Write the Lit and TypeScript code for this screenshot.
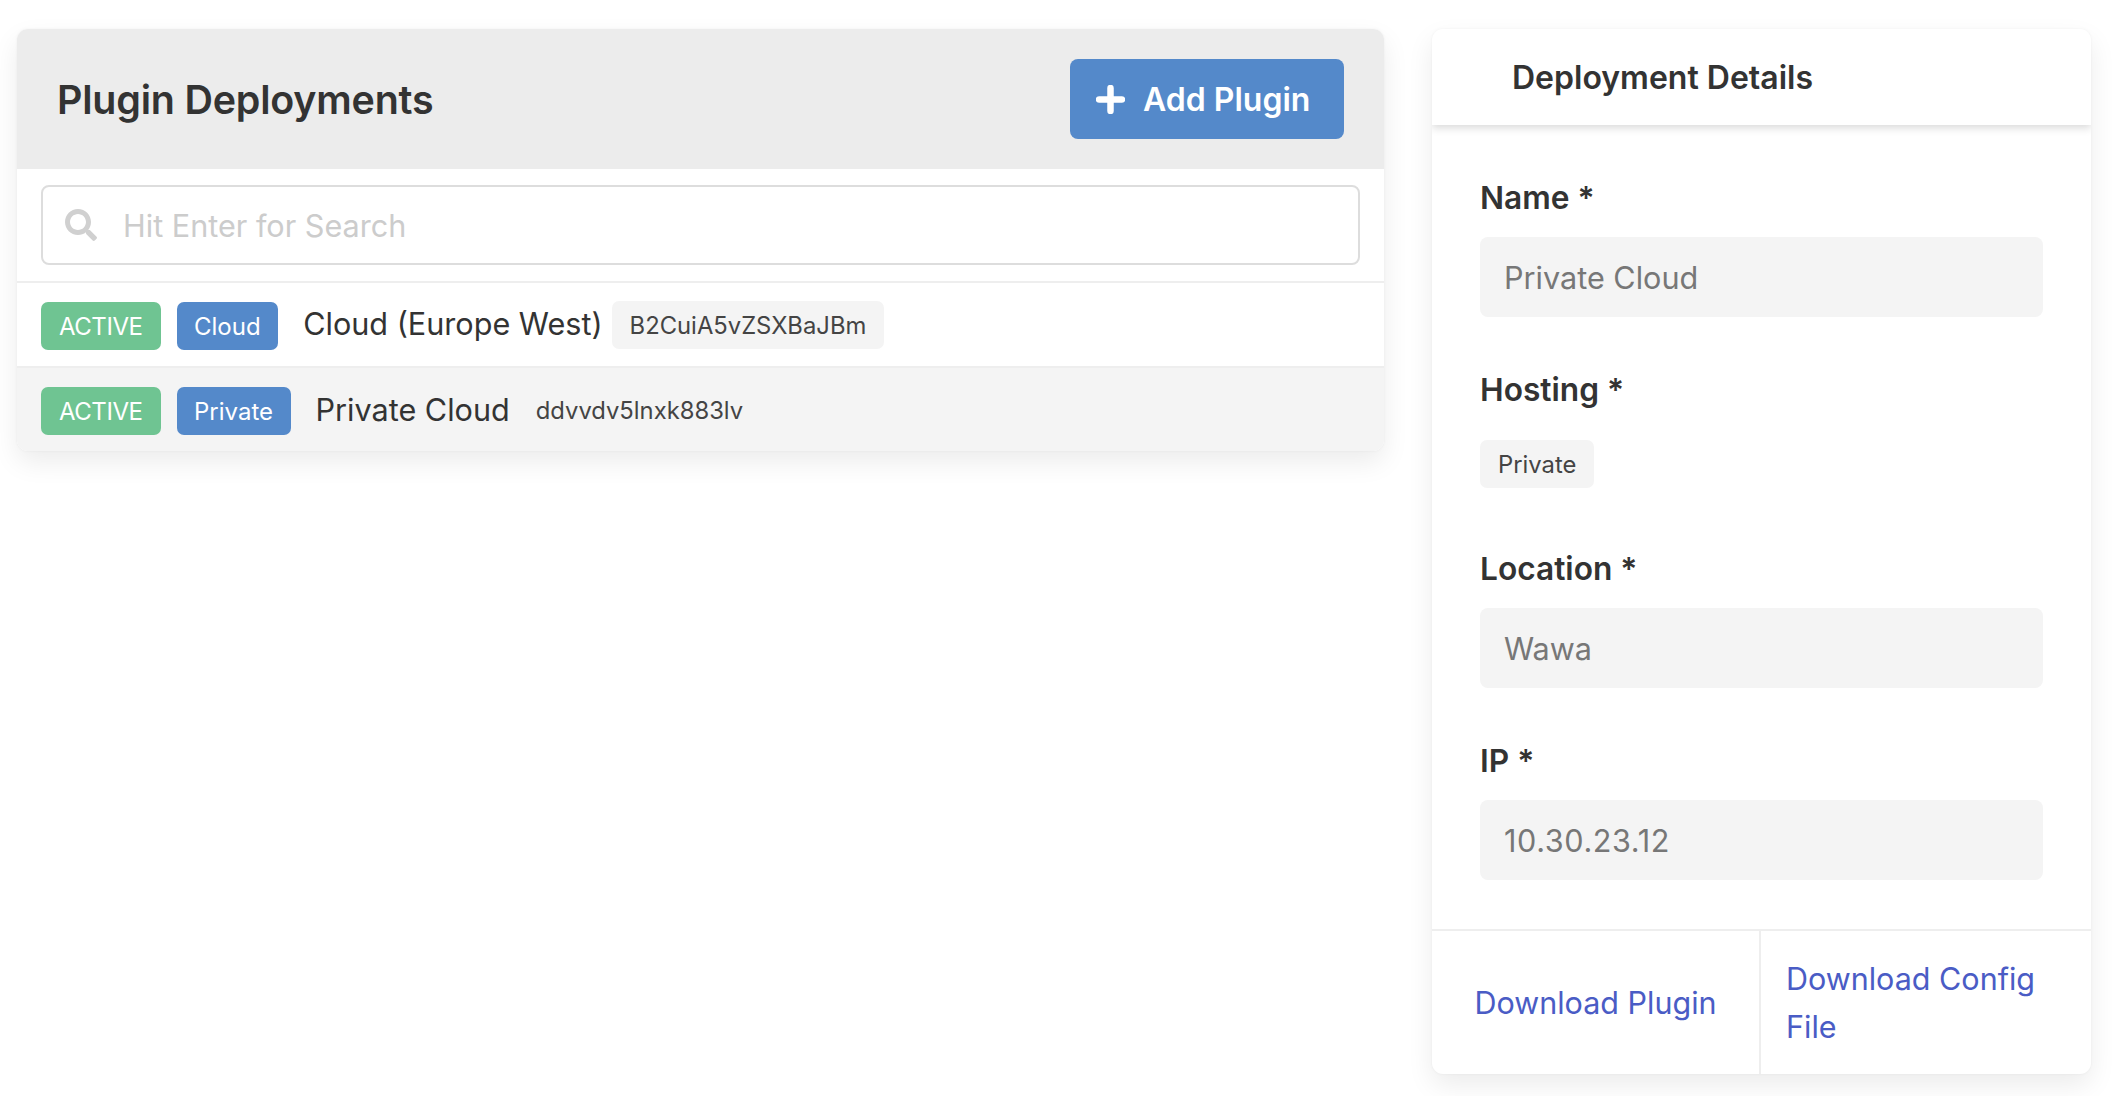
import { LitElement, html, css } from "lit";
import { customElement } from "lit/decorators.js";

@customElement("app-root")
export class AppRoot extends LitElement {
  static styles = css`
    :host { display: block; font-family: Inter, "Liberation Sans", sans-serif; color: #333; background: #fff; height: 1096px; overflow: hidden; box-sizing: border-box; }
    * { box-sizing: border-box; }
    .page { display: flex; align-items: flex-start; gap: 48px; padding: 29px 27px 0 17px; }
    .card { background: #fff; border-radius: 11px; box-shadow: 0 11px 27px rgba(0,0,0,.08), 0 0 3px rgba(0,0,0,.05); overflow: hidden; }
    .list { flex: 0 0 1367px; }
    .head { height: 140px; background: #ececec; display: flex; align-items: center; justify-content: space-between; padding: 0 40px; }
    .head h1 { margin: 2px 0 0; font-size: 39.4px; font-weight: 600; letter-spacing: -0.2px; }
    .add { height: 80px; width: 274px; background: #5489ca; color: #fff; border-radius: 8px; display: flex; align-items: center; gap: 18px; padding-left: 26px; font-size: 32px; font-weight: 600; }
    .add svg { width: 29px; height: 29px; flex: none; }
    .search-wrap { height: 114px; padding: 16px 24px 16px; border-bottom: 2px solid #eee; }
    .search { height: 80px; border: 2px solid #ddd; border-radius: 8px; display: flex; align-items: center; padding-left: 22px; gap: 26px; font-size: 30.6px; color: #ccc; }
    .search svg { width: 32px; height: 32px; fill: #d0d0d0; flex: none; }
    .row { height: 85px; display: flex; align-items: center; padding: 3px 24px 0; border-bottom: 2px solid #eee; }
    .row.alt { height: 83px; background: #f4f4f4; border-bottom: 0; }
    .badge { height: 48px; border-radius: 7px; display: flex; align-items: center; padding: 0 18px; color: #fff; font-size: 24px; margin-right: 16px; }
    .green { background: #6fc492; letter-spacing: -0.45px; }
    .blue { background: #5489ca; margin-right: 25px; padding: 0 17.5px; }
    .name { font-size: 30.6px; margin-right: 9px; margin-bottom: 6px; }
    .row.alt .name { margin-bottom: 4px; margin-right: 8px; }
    .chip { height: 48px; display: flex; align-items: center; padding: 0 18px; border-radius: 7px; font-size: 23.8px; color: #444; margin-bottom: 2px; }
    .chip.fill { background: #f4f4f4; }
    .details { flex: 0 0 659px; height: 1045px; display: flex; flex-direction: column; }
    .dhead { height: 96px; display: flex; align-items: center; padding-left: 80px; font-size: 32px; font-weight: 600; box-shadow: 0 3px 8px rgba(0,0,0,.15); position: relative; }
    .form { flex: 1; padding: 0 48px; }
    label { display: flex; align-items: center; height: 40px; font-size: 31.7px; font-weight: 600; margin-bottom: 20px; }
    .field { height: 80px; background: #f4f4f4; border-radius: 8px; display: flex; align-items: center; padding-left: 24px; font-size: 30.6px; color: #777; }
    .field.ip { letter-spacing: .6px; }
    .tag { display: flex; width: fit-content; align-items: center; height: 48px; margin-top: 31px; padding: 0 18px; background: #f4f4f4; border-radius: 7px; font-size: 23.8px; color: #444; }
    .group { margin-top: 52px; }
    .group.after-tag { margin-top: 60px; }
    .foot { display: flex; height: 145px; border-top: 2px solid #eee; font-size: 30.5px; line-height: 48px; color: #4a5cc5; }
    .foot a { display: flex; align-items: center; }
    .foot a:first-child { flex: 0 0 329px; justify-content: center; border-right: 2px solid #eee; }
    .foot a:last-child { flex: 1; padding: 0 25px; }
  `;

  render() {
    return html`<div class="page">
      <section class="card list">
        <header class="head">
          <h1>Plugin Deployments</h1>
          <div class="add"><svg viewBox="0 0 29 29"><path d="M14.5 3v23M3 14.5h23" stroke="#fff" stroke-width="6.5" stroke-linecap="round" fill="none"/></svg>Add Plugin</div>
        </header>
        <div class="search-wrap"><div class="search"><svg viewBox="0 0 512 512"><path d="M505 442.7L405.3 343c-4.5-4.5-10.6-7-17-7H372c27.6-35.3 44-79.7 44-128C416 93.1 322.9 0 208 0S0 93.1 0 208s93.1 208 208 208c48.3 0 92.7-16.4 128-44v16.3c0 6.4 2.5 12.5 7 17l99.7 99.7c9.4 9.4 24.6 9.4 33.9 0l28.3-28.3c9.4-9.4 9.4-24.6.1-34zM208 336c-70.7 0-128-57.2-128-128 0-70.7 57.2-128 128-128 70.7 0 128 57.2 128 128 0 70.7-57.2 128-128 128z"/></svg>Hit Enter for Search</div></div>
        <div class="row"><span class="badge green">ACTIVE</span><span class="badge blue">Cloud</span><span class="name">Cloud (Europe West)</span><span class="chip fill">B2CuiA5vZSXBaJBm</span></div>
        <div class="row alt"><span class="badge green">ACTIVE</span><span class="badge blue">Private</span><span class="name">Private Cloud</span><span class="chip">ddvvdv5lnxk883lv</span></div>
      </section>
      <aside class="card details">
        <div class="dhead">Deployment Details</div>
        <div class="form">
          <div class="group"><label>Name *</label><div class="field">Private Cloud</div></div>
          <div class="group"><label>Hosting *</label><span class="tag">Private</span></div>
          <div class="group after-tag"><label>Location *</label><div class="field">Wawa</div></div>
          <div class="group"><label>IP *</label><div class="field ip">10.30.23.12</div></div>
        </div>
        <div class="foot"><a>Download Plugin</a><a>Download Config File</a></div>
      </aside>
    </div>`;
  }
}
